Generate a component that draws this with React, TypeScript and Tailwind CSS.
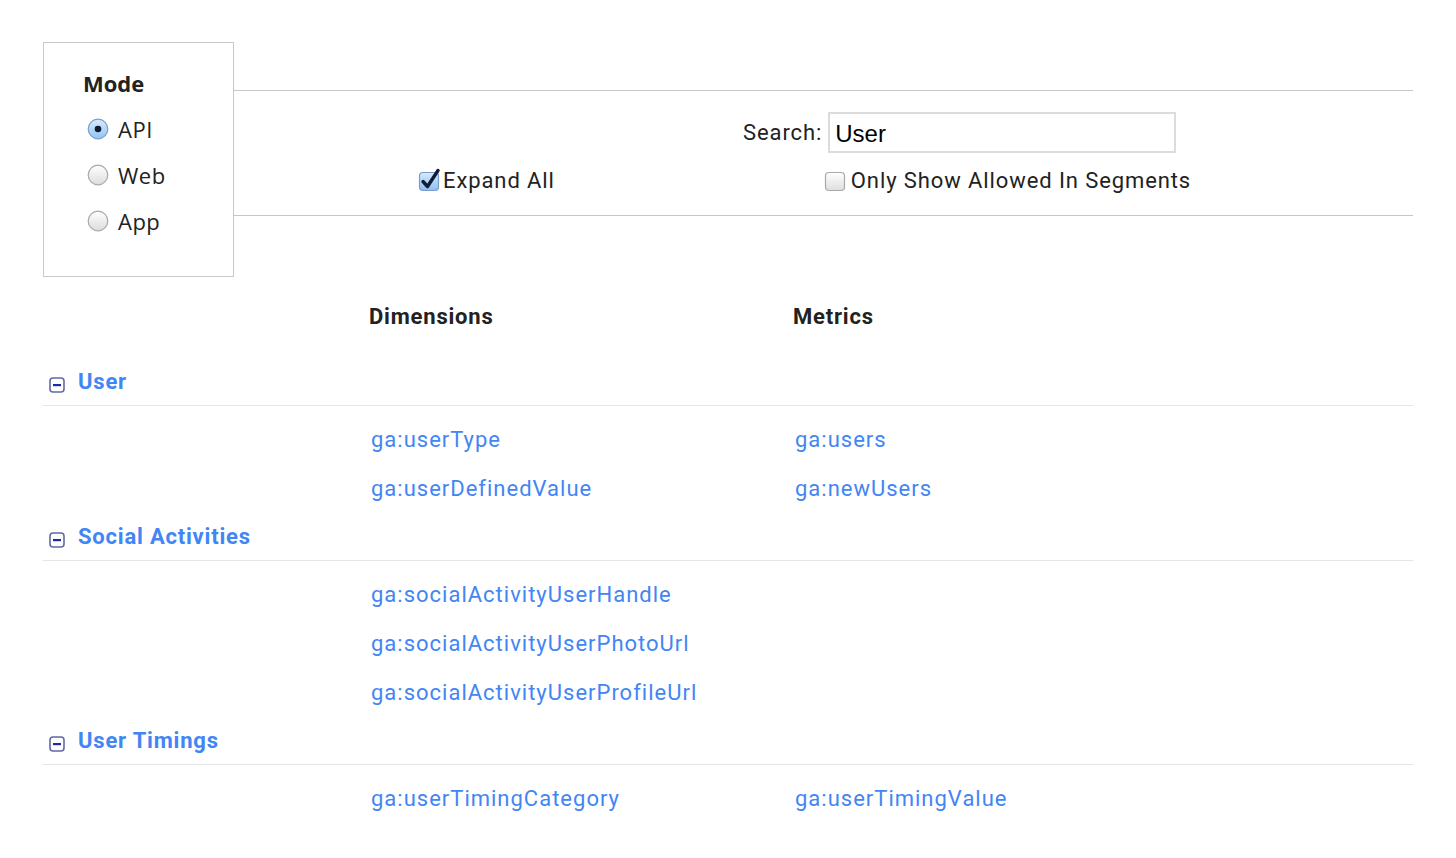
import React, { useState } from 'react';

type Group = {
  name: string;
  dims: string[];
  metrics: string[];
};

const groups: Group[] = [
  { name: 'User', dims: ['ga:userType', 'ga:userDefinedValue'], metrics: ['ga:users', 'ga:newUsers'] },
  {
    name: 'Social Activities',
    dims: ['ga:socialActivityUserHandle', 'ga:socialActivityUserPhotoUrl', 'ga:socialActivityUserProfileUrl'],
    metrics: [],
  },
  { name: 'User Timings', dims: ['ga:userTimingCategory'], metrics: ['ga:userTimingValue'] },
];

const Radio = ({ checked }: { checked: boolean }) => (
  <svg width="22" height="22" viewBox="0 0 22 22" className="shrink-0">
    <defs>
      <linearGradient id={checked ? 'rOn' : 'rOff'} x1="0" y1="0" x2="0" y2="1">
        {checked ? (
          <>
            <stop offset="0" stopColor="#d9ecfd" />
            <stop offset="1" stopColor="#8fc3f5" />
          </>
        ) : (
          <>
            <stop offset="0" stopColor="#ffffff" />
            <stop offset="1" stopColor="#dcdcdc" />
          </>
        )}
      </linearGradient>
    </defs>
    <circle cx="11" cy="11" r="9.8" fill={`url(#${checked ? 'rOn' : 'rOff'})`} stroke={checked ? '#7c9fc8' : '#a8a8a8'} strokeWidth="1.2" />
    {checked && <circle cx="11" cy="11" r="3.3" fill="#0e1b33" />}
  </svg>
);

const Checkbox = ({ checked }: { checked: boolean }) => (
  <svg width="24" height="24" viewBox="0 0 24 24" className="shrink-0 overflow-visible">
    <defs>
      <linearGradient id={checked ? 'cOn' : 'cOff'} x1="0" y1="0" x2="0" y2="1">
        {checked ? (
          <>
            <stop offset="0" stopColor="#d6ebfd" />
            <stop offset="1" stopColor="#8cc0f3" />
          </>
        ) : (
          <>
            <stop offset="0" stopColor="#ffffff" />
            <stop offset="1" stopColor="#dedede" />
          </>
        )}
      </linearGradient>
    </defs>
    <rect x="2.5" y="4.5" width="19" height="18" rx="3.5" fill={`url(#${checked ? 'cOn' : 'cOff'})`} stroke={checked ? '#7a9cc6' : '#a9a9a9'} strokeWidth="1.2" />
    {checked && (
      <path d="M6 13.5 L10.5 18.5 L21 2.5" fill="none" stroke="#0f1d36" strokeWidth="3.4" strokeLinecap="round" strokeLinejoin="round" />
    )}
  </svg>
);

const CollapseIcon = () => (
  <svg width="16" height="16" viewBox="0 0 16 16" className="shrink-0">
    <rect x="1" y="1" width="14" height="14" rx="3" fill="#fff" stroke="#6169a6" strokeWidth="1.6" />
    <rect x="4" y="7" width="8" height="2.2" fill="#1d2aa5" />
  </svg>
);

export default function App() {
  const [mode, setMode] = useState('API');
  const [search, setSearch] = useState('User');

  return (
    <div className="min-h-screen bg-white pl-[43px] pr-[43px] pt-[42px] text-[22px] text-[#222] font-['Roboto',sans-serif]">
      {/* top: mode box + filter panel */}
      <div className="flex">
        <div className="w-[191px] h-[235px] shrink-0 border border-[#c9c9c9] pl-[39px] pt-[25px]">
          <div className="font-bold leading-[30px] font-['Open_Sans',sans-serif] text-[22px]">Mode</div>
          <div className="mt-[8px] flex flex-col">
            {['API', 'Web', 'App'].map((m) => (
              <label key={m} className="flex items-center h-[46px] cursor-pointer" onClick={() => setMode(m)}>
                <span className="ml-[4px] mr-[9px] flex">
                  <Radio checked={mode === m} />
                </span>
                <span className="font-['Open_Sans',sans-serif] text-[22px] tracking-[0.5px]">{m}</span>
              </label>
            ))}
          </div>
        </div>

        <div className="flex-1 mt-[48px] h-[126px] border-y border-[#c6c6c6] tracking-[0.9px]">
          <div className="flex items-center pl-[509px] pt-[21px]">
            <span className="leading-[41px]">Search:</span>
            <input
              value={search}
              onChange={(e) => setSearch(e.target.value)}
              className="ml-[6px] w-[348px] h-[41px] border-2 border-[#dcdcdc] px-[5px] pt-[2px] text-[24px] tracking-normal text-black outline-none font-['Liberation_Sans',sans-serif]"
            />
          </div>
          <div className="flex items-center h-[30px] mt-[12px]">
            <label className="flex items-center ml-[183px]">
              <Checkbox checked={true} />
              <span className="ml-[2px]">Expand All</span>
            </label>
            <label className="flex items-center ml-[268px]">
              <Checkbox checked={false} />
              <span className="ml-[4px]">Only Show Allowed In Segments</span>
            </label>
          </div>
        </div>
      </div>

      {/* column headers */}
      <div className="grid grid-cols-[326px_424px_1fr] h-[48px] mt-[15px] mb-[18px] items-center font-bold tracking-[0.8px]">
        <div />
        <div>Dimensions</div>
        <div>Metrics</div>
      </div>

      {groups.map((g) => (
        <div key={g.name}>
          <div className="flex items-center h-[48px] border-b border-[#e6e6e6]">
            <span className="ml-[6px] mt-[6px] flex">
              <CollapseIcon />
            </span>
            <span className="ml-[13px] font-bold text-[#4285f4] tracking-[0.8px]">{g.name}</span>
          </div>
          <div className="pt-[9px]">
            {Array.from({ length: Math.max(g.dims.length, g.metrics.length) }).map((_, i) => (
              <div key={i} className="grid grid-cols-[326px_424px_1fr] h-[49px] items-center text-[#4285f4] tracking-[1px]">
                <div />
                <div className="pl-[2px]">{g.dims[i] ?? ''}</div>
                <div className="pl-[2px]">{g.metrics[i] ?? ''}</div>
              </div>
            ))}
          </div>
        </div>
      ))}
    </div>
  );
}
